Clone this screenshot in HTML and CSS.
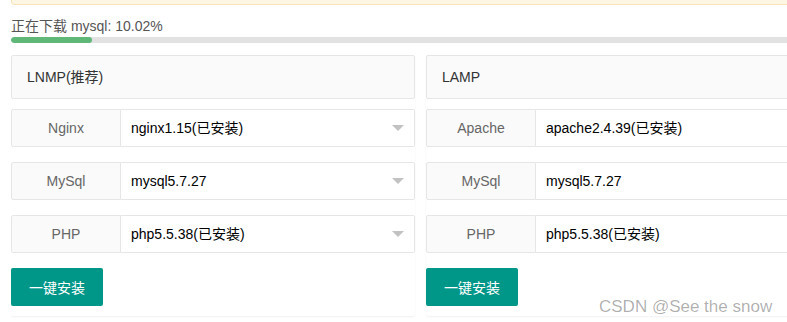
FILE: index.html
```html
<!DOCTYPE html>
<html lang="zh-CN">
<head>
  <meta charset="UTF-8">
  <title>一键安装</title>
  <link rel="stylesheet" href="styles.css">
</head>
<body>

  <div class="page">
    <div class="notice"></div>

    <div class="progress-text">正在下载 mysql: 10.02%</div>
    <div class="progress">
      <div class="progress-bar" style="width: 10.02%"></div>
    </div>

    <div class="cards">
      <div class="card">
        <div class="card-header">LNMP(推荐)</div>
        <div class="form-item">
          <label class="form-label">Nginx</label>
          <div class="select">
            <span class="select-value">nginx1.15(已安装)</span>
            <i class="select-arrow"></i>
          </div>
        </div>
        <div class="form-item">
          <label class="form-label">MySql</label>
          <div class="select">
            <span class="select-value">mysql5.7.27</span>
            <i class="select-arrow"></i>
          </div>
        </div>
        <div class="form-item">
          <label class="form-label">PHP</label>
          <div class="select">
            <span class="select-value">php5.5.38(已安装)</span>
            <i class="select-arrow"></i>
          </div>
        </div>
        <button class="btn">一键安装</button>
      </div>

      <div class="card">
        <div class="card-header">LAMP</div>
        <div class="form-item">
          <label class="form-label">Apache</label>
          <div class="select">
            <span class="select-value">apache2.4.39(已安装)</span>
            <i class="select-arrow"></i>
          </div>
        </div>
        <div class="form-item">
          <label class="form-label">MySql</label>
          <div class="select">
            <span class="select-value">mysql5.7.27</span>
            <i class="select-arrow"></i>
          </div>
        </div>
        <div class="form-item">
          <label class="form-label">PHP</label>
          <div class="select">
            <span class="select-value">php5.5.38(已安装)</span>
            <i class="select-arrow"></i>
          </div>
        </div>
        <button class="btn">一键安装</button>
      </div>
    </div>
  </div>

  <div class="watermark">CSDN @See the snow</div>

</body>
</html>
```

FILE: styles.css
```css
html, body {
  margin: 0;
  overflow: hidden;
}

body {
  font-family: "Liberation Sans", Arial, "Noto Sans CJK SC", sans-serif;
  font-size: 14px;
  color: #333;
  background: #fff;
  position: relative;
  height: 322px;
}

/* 右边被窗口截掉 */
.page {
  width: 776px;
  margin-left: 11px;
  overflow: hidden;
}

/* 上面的提示框，只露出底部 */
.notice {
  width: 808px;
  height: 4px;
  background: #fdf6e2;
  border: 1px solid #fbe3b8;
  border-top: none;
  border-radius: 0 0 4px 4px;
}

.progress-text {
  margin-top: 11px;
  line-height: 20px;
  color: #555;
}

.progress {
  margin-top: 1px;
  width: 808px;
  height: 6px;
  background: #e2e2e2;
  border-radius: 20px;
  overflow: hidden;
}

.progress-bar {
  height: 100%;
  background: #5fb878;
  border-radius: 20px;
}

.cards {
  display: flex;
  gap: 11px;
  margin-top: 12px;
  padding-bottom: 4px;
}

.card {
  flex: 0 0 404px;
  background: #fff;
  border-radius: 2px;
  box-shadow: 0 1px 2px 0 rgba(0, 0, 0, .06);
  padding-bottom: 10px;
}

.card-header {
  height: 42px;
  line-height: 42px;
  padding: 0 15px;
  background: #fafafa;
  border: 1px solid #e6e6e6;
  border-radius: 2px;
  color: #333;
}

.form-item {
  display: flex;
  height: 38px;
  margin-top: 10px;
}

.form-item + .form-item {
  margin-top: 15px;
}

.form-label {
  box-sizing: border-box;
  width: 110px;
  flex: 0 0 110px;
  line-height: 36px;
  text-align: center;
  background: #fafafa;
  border: 1px solid #e6e6e6;
  border-radius: 2px 0 0 2px;
  color: #666;
}

.select {
  flex: 1;
  position: relative;
  box-sizing: border-box;
  border: 1px solid #e6e6e6;
  border-left: none;
  border-radius: 0 2px 2px 0;
  padding-left: 10px;
  line-height: 36px;
  color: #000;
}

.select-arrow {
  position: absolute;
  right: 10px;
  top: 50%;
  margin-top: -3px;
  width: 0;
  height: 0;
  border-left: 6px solid transparent;
  border-right: 6px solid transparent;
  border-top: 6px solid #c2c2c2;
}

.btn {
  display: block;
  margin-top: 15px;
  width: 92px;
  height: 38px;
  border: none;
  border-radius: 2px;
  background: #009688;
  color: #fff;
  font-family: inherit;
  font-size: 14px;
  cursor: pointer;
}

.watermark {
  position: absolute;
  left: 599px;
  top: 297px;
  font-size: 17px;
  color: rgba(0, 0, 0, .33);
  white-space: nowrap;
}
```
